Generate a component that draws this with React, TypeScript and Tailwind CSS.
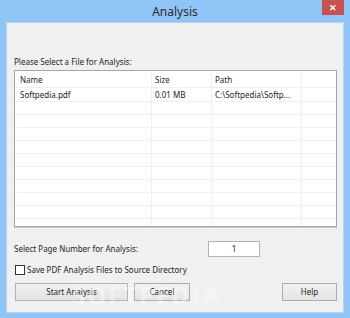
const rows = [
  { name: "Softpedia.pdf", size: "0.01 MB", path: "C:\\Softpedia\\Softp..." },
  { name: "", size: "", path: "" },
  { name: "", size: "", path: "" },
  { name: "", size: "", path: "" },
  { name: "", size: "", path: "" },
  { name: "", size: "", path: "" },
  { name: "", size: "", path: "" },
  { name: "", size: "", path: "" },
  { name: "", size: "", path: "" },
  { name: "", size: "", path: "" },
  { name: "", size: "", path: "" },
];

function Cell({ w, children, pl = "pl-[3px]" }: { w: string; children?: React.ReactNode; pl?: string }) {
  return (
    <div className={`${w} ${pl} h-full border-r border-[#f0f0f0] flex items-center whitespace-nowrap overflow-hidden`}>
      {children}
    </div>
  );
}

export default function App() {
  return (
    <div className="w-[350px] h-[318px] bg-[#8ec4f6] flex flex-col font-['Noto_Sans',sans-serif] text-[8px] text-[#1e1e1e] overflow-hidden">
      {/* title bar */}
      <div className="h-[22px] flex items-start shrink-0">
        <div className="flex-1 h-full flex items-center justify-center pl-[28px] text-[12px] text-[#2b2b2b] pt-[1px]">
          Analysis
        </div>
        <button className="w-[22px] h-[15px] mr-[6px] bg-[#c75050] flex items-center justify-center text-white text-[9px] font-bold leading-none">
          ✕
        </button>
      </div>

      {/* client area */}
      <div className="mx-[6px] mb-[5px] flex-1 bg-[#f0f0f0] border border-[#b8d3ec] flex flex-col pl-[7px] pr-[5px]">
        <div className="mt-[31px] h-[15px] flex items-center">Please Select a File for Analysis:</div>

        <div className="mt-[1px] w-[323px] h-[157px] bg-white border border-[#a6a6a6] shadow-[0_1px_0_#c9c9c9] flex flex-col overflow-hidden">
          <div className="h-[17px] shrink-0 flex border-b border-[#f0f0f0] pt-[2px]">
            <Cell w="w-[137px]" pl="pl-[5px]">Name</Cell>
            <Cell w="w-[60px]">Size</Cell>
            <Cell w="w-[90px]">Path</Cell>
            <div className="flex-1" />
          </div>
          {rows.map((r, i) => (
            <div key={i} className={`${i === 0 ? "h-[14px]" : "h-[13px]"} shrink-0 flex border-b border-[#f0f0f0]`}>
              <Cell w="w-[137px]" pl="pl-[5px]">{r.name}</Cell>
              <Cell w="w-[60px]">{r.size}</Cell>
              <Cell w="w-[90px]">{r.path}</Cell>
              <div className="flex-1" />
            </div>
          ))}
        </div>

        <div className="mt-[14px] flex items-center">
          <span className="w-[194px]">Select Page Number for Analysis:</span>
          <div className="w-[52px] h-[16px] bg-white border border-[#b4b4b4] flex items-center justify-center">1</div>
        </div>

        <label className="mt-[7px] flex items-center gap-[2px]">
          <span className="w-[10px] h-[10px] ml-[1px] bg-white border border-[#333]" />
          <span>Save PDF Analysis Files to Source Directory</span>
        </label>

        <div className="relative mt-[7px] flex items-center">
          <button className="ml-[1px] w-[113px] h-[18px] border border-[#a9b4c2] bg-gradient-to-b from-[#f2f2f2] to-[#e3e3e3] flex items-center justify-center">
            Start Analysis
          </button>
          <button className="ml-[6px] w-[56px] h-[18px] border border-[#acacac] bg-gradient-to-b from-[#f2f2f2] to-[#e3e3e3] flex items-center justify-center">
            Cancel
          </button>
          <div className="flex-1" />
          <button className="mr-[1px] w-[55px] h-[18px] border border-[#acacac] bg-gradient-to-b from-[#f2f2f2] to-[#e3e3e3] flex items-center justify-center">
            Help
          </button>
          <span className="absolute left-[58px] top-[-6px] text-[24px] font-bold tracking-[2px] text-white/40 pointer-events-none select-none">
            SOFTPEDIA
          </span>
        </div>
      </div>
    </div>
  );
}
